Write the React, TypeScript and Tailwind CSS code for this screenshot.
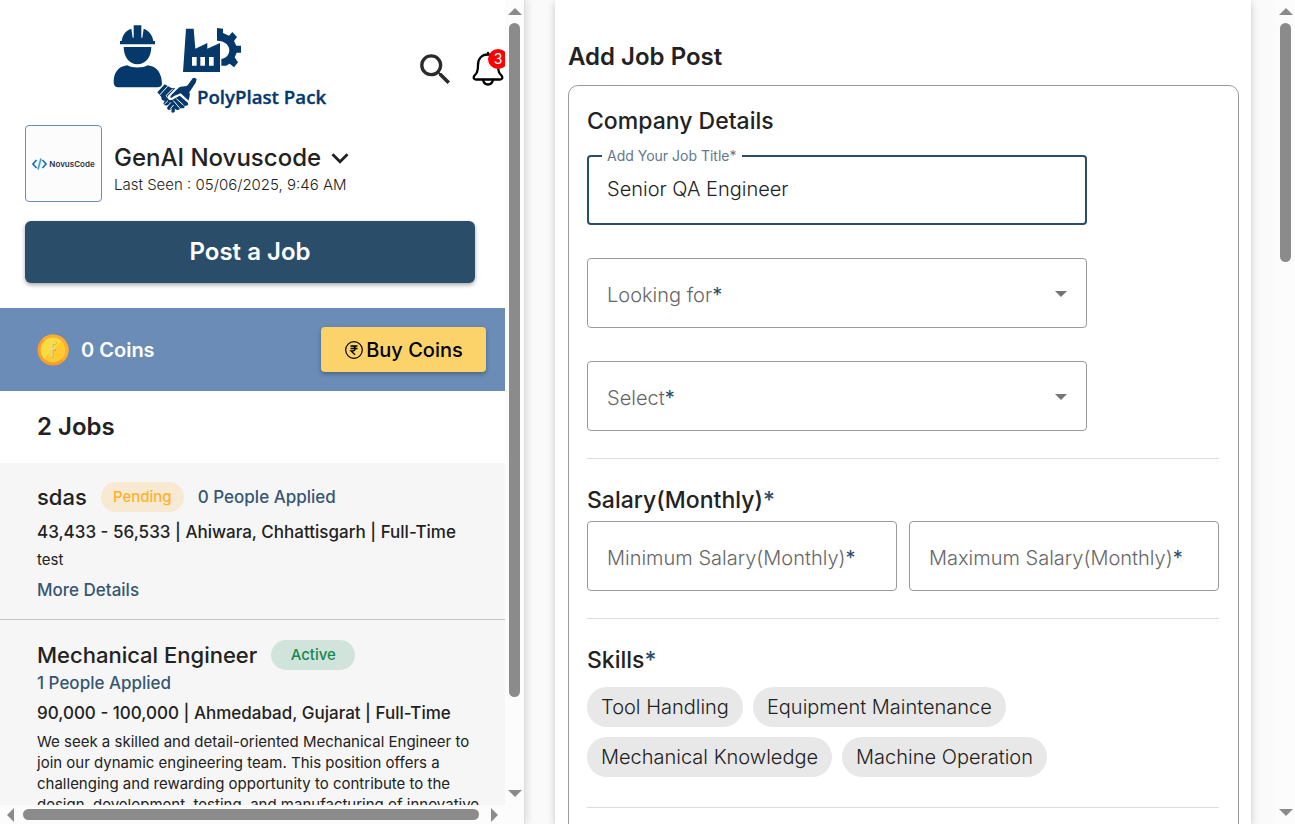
import { useId, useState } from "react";
import type { ReactNode } from "react";
import { MdKeyboardArrowDown, MdSearch } from "react-icons/md";

function Logo() {
  return (
    <svg viewBox="0 0 720 315" className="h-[105px] w-[240px] shrink-0" fill="#05386b" role="img" aria-label="PolyPlast Pack">
      <path d="M60 88 V78 H65 C67 60 78 46 94 41 L98 68 H101 V31 H124 V68 H127 L131 41 C147 47 158 61 160 78 H165 V88 Z" />
      <path d="M71 96 H154 C154 126 136 148 112 148 C89 148 71 126 71 96 Z" />
      <path d="M41 202 C41 174 54 154 82 151 C96 160 129 160 143 151 C171 154 185 174 186 207 Q184 217 173 217 H55 Q41 217 41 202 Z" />
      <path
        fillRule="evenodd"
        d="M249 171 L258 41 H281 L286 101 L322 84 V101 L360 84 V171 Z M276 126 V152 H290 V126 Z M301 126 V152 H315 V126 Z M327 126 V152 H341 V126 Z"
      />
      <path d="M351 39 L369 41 V54 L387 62 L397 51 L411 66 L402 78 L409 92 H423 V113 H410 L404 127 L414 142 L402 157 L389 146 L378 152 H364 V132 C398 126 398 78 351 77 Z" />
      <path d="M172 232 L194 208 L214 219 L226 220 L204 242 C202 256 212 259 222 251 L239 242 L262 262 Q269 271 259 272 L253 272 Q256 281 245 280 L239 280 Q239 287 229 284 L224 281 Q227 291 219 293 Q211 293 216 282 Q204 289 201 279 L205 271 Q193 274 190 266 L194 257 Q183 257 184 246 Z" />
      <path d="M222 243 C212 253 206 248 216 238 L236 218 C246 212 255 217 263 211 L278 190 Q285 185 290 193 L287 203 L268 232 C272 241 266 252 266 257 L242 235 Z" />
      <g fill="none" stroke="#fff" strokeWidth="3" strokeLinecap="round">
        <path d="M202 215 L179 240 M218 222 L199 241 Q203 257 219 251 L240 239 L264 259 M230 252 L250 270 M221 258 L238 278 M203 258 L194 267 M212 263 L201 275 M220 271 L211 282" />
      </g>
      <text x="291" y="267" fontSize="56" fontWeight="600" stroke="#05386b" strokeWidth="1" fontFamily="'Open Sans', 'Noto Sans', sans-serif">
        PolyPlast Pack
      </text>
    </svg>
  );
}

function BellIcon() {
  return (
    <svg viewBox="0 0 32 36" className="h-9 w-8" fill="none" stroke="#000" strokeWidth="2.300" strokeLinejoin="round" strokeLinecap="round">
      <path d="M16 2 V3 M16 3.500 C9.500 3.500 6 8 6 14 C6 21 4.500 22.500 2.500 24.500 C1 26.500 1.500 28.500 4 28.500 H28 C30.500 28.500 31 26.500 29.500 24.500 C27.500 22.500 26 21 26 14 C26 8 22.500 3.500 16 3.500 Z" />
      <path d="M11 28.500 C11.500 32 13.500 33.500 16 33.500 C18.500 33.500 20.500 32 21 28.500" />
    </svg>
  );
}

function CoinIcon() {
  return (
    <svg viewBox="0 0 32 32" className="size-8">
      <circle cx="16" cy="16" r="15.500" fill="#fb9c2d" />
      <path d="M16 0.500 A15.500 15.500 0 0 1 27 27 L5 5 A15.500 15.500 0 0 1 16 0.500Z" fill="#fcae32" />
      <circle cx="16" cy="16" r="12.300" fill="#fdcb30" />
      <path d="M7.300 24.700 A12.300 12.300 0 0 1 24.700 7.300 Z" fill="#fbdc3f" />
      <path d="M19.500 9.500 C16.500 8.500 15 9.500 15 12 V24 M13 15.500 H19" fill="none" stroke="#dba82f" strokeWidth="3" />
      <path d="M19 9 C16 8 14.500 9 14.500 11.500 V23.500 M12.500 14.500 H18.500" fill="none" stroke="#f0dc74" strokeWidth="2.400" />
    </svg>
  );
}

function RupeeIcon() {
  return (
    <svg viewBox="0 0 20 20" className="size-5" fill="none" stroke="#000">
      <circle cx="10" cy="10" r="8.300" strokeWidth="1.200" />
      <path d="M6.500 6 H13.500 M6.500 8.500 H13.500 M6.500 6 H8.500 C12 6 12 11 8.500 11 H7 L11 14.800" strokeWidth="1.300" />
    </svg>
  );
}

function Arrow({ dir }: { dir: "up" | "down" | "left" | "right" }) {
  const paths = {
    up: "M0 11 L7 4 L14 11 Z",
    down: "M0 4 L7 11 L14 4 Z",
    left: "M10 0 L3 7 L10 14 Z",
    right: "M4 0 L11 7 L4 14 Z",
  };
  return (
    <svg viewBox="0 0 14 14" className="size-[14px] shrink-0" fill="#8b8b8b" aria-hidden="true">
      <path d={paths[dir]} />
    </svg>
  );
}

function VerticalBar({ thumb }: { thumb: string }) {
  return (
    <div className="flex w-[19px] shrink-0 flex-col items-center bg-[#fcfcfc] pt-1 pb-[5px]">
      <Arrow dir="up" />
      <div className="my-1 flex min-h-0 flex-1 flex-col pt-px">
        <div className={"w-[11px] rounded-full bg-[#8b8b8b] " + thumb} />
      </div>
      <Arrow dir="down" />
    </div>
  );
}

function Field({ label, id, children }: { label: string; id: string; children: ReactNode }) {
  return (
    <div className="relative h-[70px] rounded border border-[#9a9a9a] bg-white">
      {children}
      <label htmlFor={id} className="pointer-events-none absolute inset-y-0 left-[19px] flex items-center pt-[3px] text-xl font-light text-[#666]">
        {label}
        <span className="font-normal text-[#2a4d69]">*</span>
      </label>
    </div>
  );
}

function SelectField({ label, options }: { label: string; options: string[] }) {
  const id = useId();
  return (
    <Field label={label} id={id}>
      <select id={id} defaultValue="" className="h-full w-full appearance-none rounded bg-transparent px-5 text-xl text-transparent outline-none">
        <option value="" />
        {options.map((o) => (
          <option key={o} value={o} />
        ))}
      </select>
      <svg viewBox="0 0 12 6" className="pointer-events-none absolute top-8 right-[19px] h-[6px] w-3" fill="#757575">
        <path d="M0 0 H12 L6 6 Z" />
      </svg>
    </Field>
  );
}

function InputField({ label }: { label: string }) {
  const id = useId();
  return (
    <Field label={label} id={id}>
      <input id={id} type="text" className="h-full w-full rounded bg-transparent px-5 text-xl font-light outline-none" />
    </Field>
  );
}

function Divider() {
  return <hr className="my-[27px] border-t border-[#dedede]" />;
}

function Sidebar() {
  return (
    <aside className="z-10 flex h-full w-[525px] shrink-0 flex-col border-r border-[#dedede] bg-white shadow-[2px_0_8px_rgba(0,0,0,0.12)]">
      <div className="flex min-h-0 flex-1">
        <div className="min-w-0 flex-1 overflow-hidden">
          <header className="flex items-start pt-[15px] pl-[100px]">
            <Logo />
            <button type="button" aria-label="Search" className="mt-[34px] ml-[75px] shrink-0 text-[#2b2b2b]">
              <MdSearch size={41} />
            </button>
            <button type="button" aria-label="Notifications" className="relative mt-9 ml-4 shrink-0">
              <BellIcon />
              <span className="absolute -top-0.5 -right-1 flex size-5 items-center justify-center rounded-full bg-[#fd0000] text-sm text-white">3</span>
            </button>
          </header>

          <div className="flex gap-3 px-[25px] pt-[5px]">
            <div className="flex size-[77px] items-center justify-center rounded border border-[#6b8db8] bg-[#fcfcfc]">
              <svg viewBox="0 0 15 12" className="h-3 w-[15px]" fill="none" strokeWidth="1.700">
                <path d="M4.500 2 L1 6 L4.500 10 M10.500 2 L14 6 L10.500 10" stroke="#1f74bd" />
                <path d="M9 0.500 L6 11.500" stroke="#2aa7ea" />
              </svg>
              <span className="pl-0.5 text-[8px] font-semibold text-[#26323c]">NovusCode</span>
            </div>
            <div className="pt-[17px]">
              <button type="button" className="flex h-8 items-center gap-0.5 text-2xl font-medium text-[#222]">
                GenAI Novuscode
                <MdKeyboardArrowDown size={34} />
              </button>
              <p className="text-[15px] leading-[22px] font-light text-[#222]">Last Seen : 05/06/2025, 9:46 AM</p>
            </div>
          </div>

          <div className="pt-[19px] pr-[30px] pb-[25px] pl-[25px]">
            <button
              type="button"
              className="h-[62px] w-full rounded-md bg-[#2a4d69] text-2xl font-semibold text-white shadow-[0_2px_4px_rgba(0,0,0,0.35)]"
            >
              Post a Job
            </button>
          </div>

          <div className="flex h-[83px] items-center justify-between bg-[#6a8cb6] pr-[19px] pl-[37px]">
            <div className="flex items-center gap-3">
              <CoinIcon />
              <span className="text-xl font-semibold text-white">0 Coins</span>
            </div>
            <button
              type="button"
              className="flex h-[45px] w-[165px] items-center justify-center gap-0.5 rounded bg-[#fcd36a] text-xl font-medium text-black shadow-[0_2px_4px_rgba(0,0,0,0.3)]"
            >
              <RupeeIcon />
              Buy Coins
            </button>
          </div>

          <h2 className="flex h-[72px] items-center pl-[37px] text-2xl font-semibold text-[#222]">2 Jobs</h2>

          <article className="h-[157px] border-b border-[#c4c4c4] bg-[#f6f6f6] px-[37px] pt-[19px]">
            <div className="flex items-center gap-[14px]">
              <h3 className="text-[22px] leading-[30px] font-medium text-[#222]">sdas</h3>
              <span className="flex h-[30px] w-[83px] items-center justify-center rounded-full bg-[#f8e9d2] text-[15px] font-medium text-[#ffb22c]">
                Pending
              </span>
              <span className="text-[17px] leading-[30px] font-medium text-[#365672]">0 People Applied</span>
            </div>
            <p className="pt-[5px] text-[17px] leading-[30px] font-medium whitespace-nowrap text-[#222]">
              43,433 - 56,533 | Ahiwara, Chhattisgarh | Full-Time
            </p>
            <p className="pt-px text-[15px] leading-6 text-[#222]">test</p>
            <a href="#details" className="mt-[3px] block text-[17px] leading-[30px] font-medium text-[#365672]">
              More Details
            </a>
          </article>

          <article className="h-[260px] bg-[#f6f6f6] pt-5 pr-5 pl-[37px]">
            <div className="flex items-center gap-[14px]">
              <h3 className="text-[22px] leading-[30px] font-medium text-[#222]">Mechanical Engineer</h3>
              <span className="flex h-[30px] w-[84px] items-center justify-center rounded-full bg-[#d1e4db] text-[15px] font-medium text-[#168750]">
                Active
              </span>
            </div>
            <p className="text-[17px] leading-[26px] font-medium text-[#365672]">1 People Applied</p>
            <p className="pt-0.5 text-[17px] leading-[30px] font-medium whitespace-nowrap text-[#222]">
              90,000 - 100,000 | Ahmedabad, Gujarat | Full-Time
            </p>
            <p className="pt-[3px] text-[15px] leading-[21px] text-[#222]">
              We seek a skilled and detail-oriented Mechanical Engineer to
              <br />
              join our dynamic engineering team. This position offers a
              <br />
              challenging and rewarding opportunity to contribute to the
              <br />
              design, development, testing, and manufacturing of innovative
            </p>
          </article>
        </div>
        <VerticalBar thumb="h-[calc(89%-2px)]" />
      </div>
      <div className="flex h-[19px] shrink-0 items-center gap-[5px] bg-[#fcfcfc] pr-[23px] pl-1">
        <Arrow dir="left" />
        <div className="mr-[3px] h-[11px] flex-1 rounded-full bg-[#8b8b8b]" />
        <Arrow dir="right" />
      </div>
    </aside>
  );
}

const skills = ["Tool Handling", "Equipment Maintenance", "Mechanical Knowledge", "Machine Operation"];

export default function App() {
  const [title, setTitle] = useState("Senior QA Engineer");
  return (
    <div className="flex h-screen overflow-hidden bg-[#fafafa] font-['Inter','Liberation_Sans',sans-serif] text-[#222]">
      <Sidebar />
      <main className="flex min-w-0 flex-1 overflow-hidden">
        <div className="mr-[25px] ml-[30px] min-w-0 flex-1 bg-white pt-10 pr-3 pl-[13px] shadow-[0_2px_8px_rgba(0,0,0,0.2)]">
          <h1 className="text-2xl leading-[33px] font-semibold">Add Job Post</h1>
          <form className="mt-3 min-h-[900px] rounded-[10px] border border-[#9a9a9a] pt-[19px] pr-[19px] pl-[18px]">
            <h2 className="text-[23px] leading-8 font-medium">Company Details</h2>
            <div className="mt-[18px] flex max-w-[500px] flex-col gap-[33px]">
              <div className="relative h-[70px] rounded border-2 border-[#2a4d69]">
                <label htmlFor="job-title" className="absolute -top-[11px] left-[13px] bg-white px-[5px] text-sm leading-5 text-[#61788e]">
                  Add Your Job Title*
                </label>
                <input
                  id="job-title"
                  type="text"
                  value={title}
                  onChange={(e) => setTitle(e.target.value)}
                  className="h-full w-full rounded bg-transparent px-[18px] pb-0.5 text-xl font-light outline-none"
                />
              </div>
              <SelectField label="Looking for" options={["Full-Time", "Part-Time"]} />
              <SelectField label="Select" options={["Fresher", "Experienced"]} />
            </div>
            <Divider />
            <h2 className="mb-[7px] text-[23px] leading-7 font-medium">
              Salary(Monthly)<span className="text-[#2a4d69]">*</span>
            </h2>
            <div className="grid grid-cols-2 gap-3">
              <InputField label="Minimum Salary(Monthly)" />
              <InputField label="Maximum Salary(Monthly)" />
            </div>
            <Divider />
            <h2 className="mb-[13px] text-[23px] leading-7 font-medium">
              Skills<span className="text-[#2a4d69]">*</span>
            </h2>
            <div className="flex max-w-[500px] flex-wrap gap-[10px] pb-[3px]">
              {skills.map((s) => (
                <button key={s} type="button" className="h-10 rounded-full bg-[#e8e8e8] px-[14px] text-xl font-light">
                  {s}
                </button>
              ))}
            </div>
            <Divider />
          </form>
        </div>
        <VerticalBar thumb="h-[calc(31%-2px)]" />
      </main>
    </div>
  );
}
